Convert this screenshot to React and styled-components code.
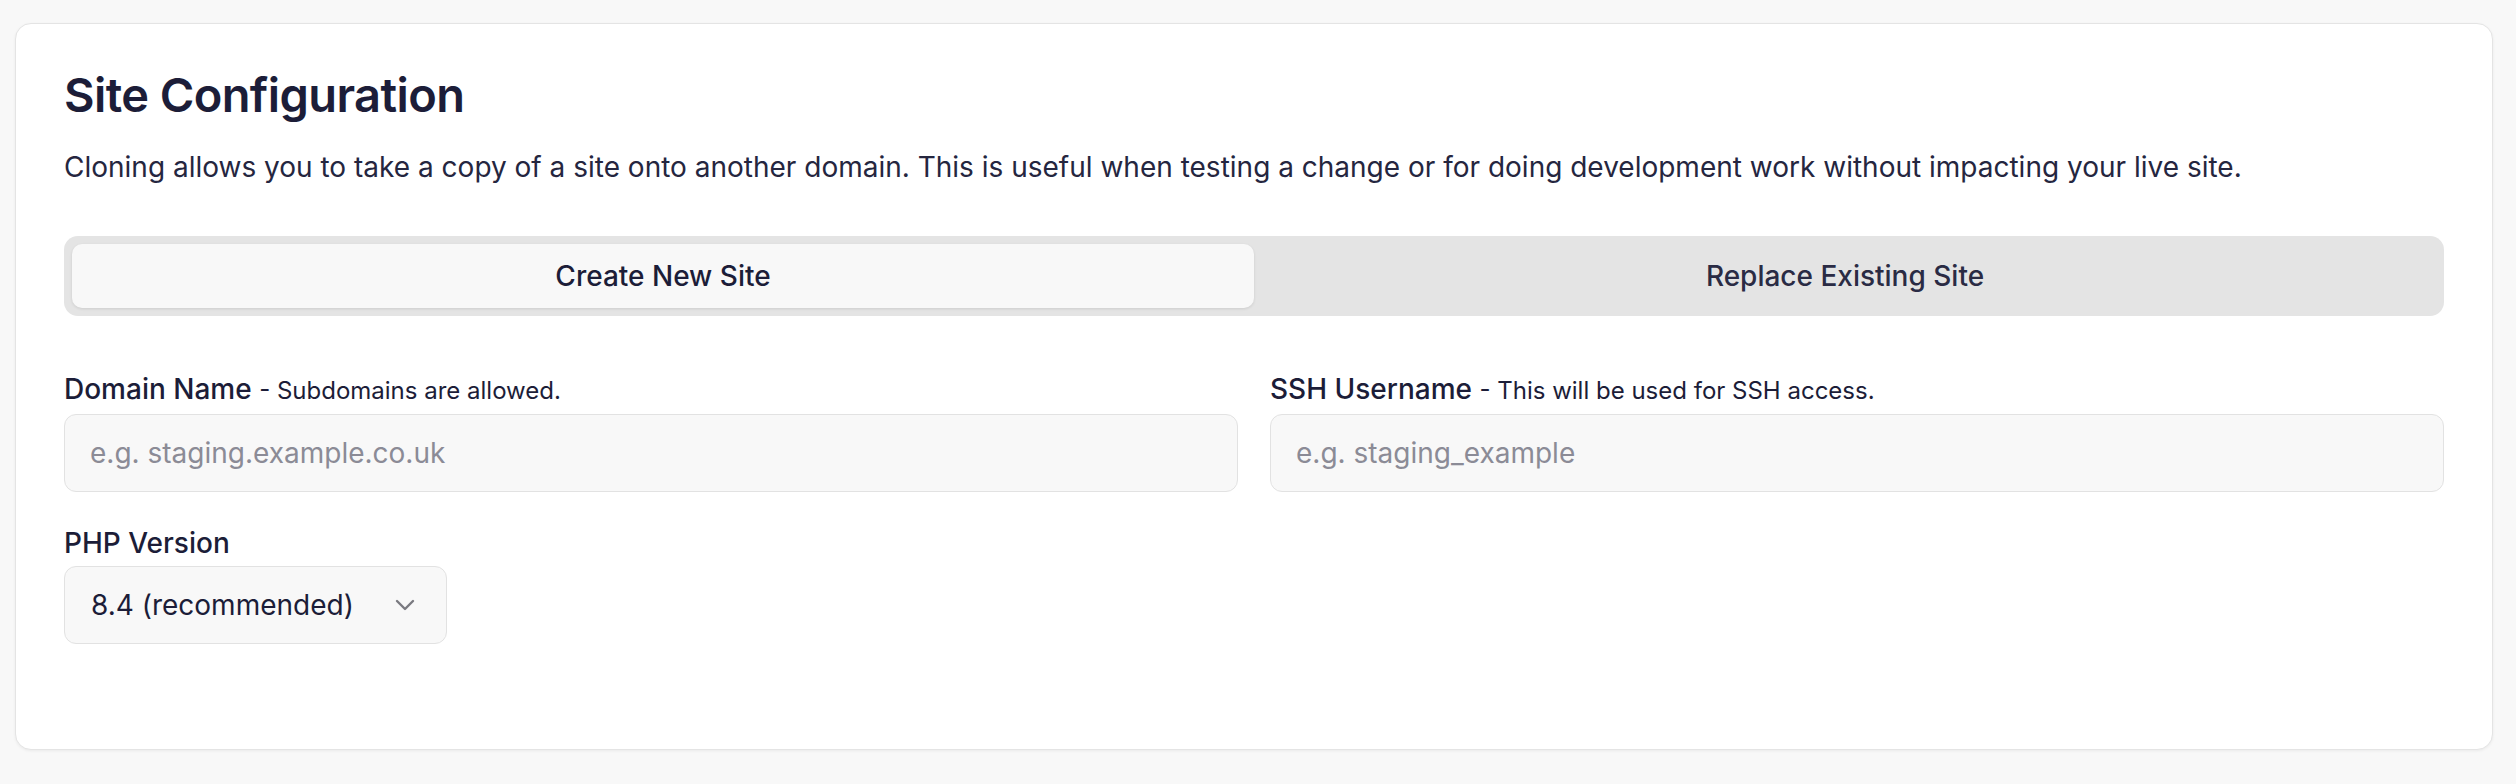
import React, { useState } from 'react'
import styled, { createGlobalStyle } from 'styled-components'

const GlobalStyle = createGlobalStyle`
  html, body {
    margin: 0;
    padding: 0;
    background: #f8f8f8;
    font-family: Inter, "Noto Sans", sans-serif;
    color: #1e1f3a;
  }
  * { box-sizing: border-box; }
`

const Page = styled.div`
  padding: 23px 23px 36px 15px;
`

const Card = styled.section`
  background: #ffffff;
  border: 1px solid #e4e4e4;
  border-radius: 16px;
  box-shadow: 0 1px 3px rgba(0, 0, 0, 0.06);
  padding: 42px 48px 105px 48px;
`

const Title = styled.h1`
  margin: 0 0 24px;
  font-size: 47px;
  line-height: 58px;
  font-weight: 600;
  letter-spacing: -0.6px;
  color: #1c1d38;
`

const Description = styled.p`
  margin: 0 0 50px;
  font-size: 28px;
  line-height: 38px;
  color: #25263f;
`

const Tabs = styled.div`
  display: grid;
  grid-template-columns: 1fr 1fr;
  background: #e4e4e4;
  border-radius: 14px;
  padding: 8px;
  margin-bottom: 54px;
`

const Tab = styled.button`
  height: 64px;
  border: none;
  border-radius: 10px;
  font-family: inherit;
  font-size: 28px;
  font-weight: 500;
  color: ${p => (p.active ? '#1c1d38' : '#2a2b44')};
  background: ${p => (p.active ? '#f8f8f8' : 'transparent')};
  box-shadow: ${p => (p.active ? '0 1px 3px rgba(0,0,0,0.1)' : 'none')};
  cursor: pointer;
`

const FieldRow = styled.div`
  display: grid;
  grid-template-columns: 1fr 1fr;
  column-gap: 32px;
  margin-bottom: 32px;
`

const Field = styled.div`
  display: flex;
  flex-direction: column;
`

const Label = styled.label`
  font-size: 28px;
  line-height: 38px;
  font-weight: 500;
  color: #1c1d38;
  margin-bottom: 4px;
`

const Hint = styled.span`
  font-size: 24px;
  font-weight: 400;
`

const Input = styled.input`
  height: 78px;
  width: 100%;
  border: 1px solid #e2e2e2;
  border-radius: 12px;
  background: #f8f8f8;
  padding: 0 25px;
  font-family: inherit;
  font-size: 28px;
  color: #1c1d38;
  outline: none;
  &::placeholder {
    color: #8b8b96;
  }
`

const SelectBox = styled.div`
  width: 383px;
  height: 78px;
  border: 1px solid #e2e2e2;
  border-radius: 12px;
  background: #f8f8f8;
  padding: 0 30px 0 26px;
  display: flex;
  align-items: center;
  justify-content: space-between;
  font-size: 28px;
  color: #1c1d38;
  cursor: pointer;
`

const Chevron = () => (
  <svg width="22" height="14" viewBox="0 0 22 14" fill="none">
    <polyline points="3,3 11,11 19,3" stroke="#7a7a80" strokeWidth="2.4" strokeLinecap="round" strokeLinejoin="round" />
  </svg>
)

export default function App() {
  const [tab, setTab] = useState('new')
  return (
    <Page>
      <GlobalStyle />
      <Card>
        <Title>Site Configuration</Title>
        <Description>
          Cloning allows you to take a copy of a site onto another domain. This is useful when testing a change or for doing development work without impacting your live site.
        </Description>
        <Tabs>
          <Tab active={tab === 'new'} onClick={() => setTab('new')}>Create New Site</Tab>
          <Tab active={tab === 'replace'} onClick={() => setTab('replace')}>Replace Existing Site</Tab>
        </Tabs>
        <FieldRow>
          <Field>
            <Label>
              Domain Name <Hint>- Subdomains are allowed.</Hint>
            </Label>
            <Input placeholder="e.g. staging.example.co.uk" />
          </Field>
          <Field>
            <Label>
              SSH Username <Hint>- This will be used for SSH access.</Hint>
            </Label>
            <Input placeholder="e.g. staging_example" />
          </Field>
        </FieldRow>
        <Field>
          <Label>PHP Version</Label>
          <SelectBox>
            <span>8.4 (recommended)</span>
            <Chevron />
          </SelectBox>
        </Field>
      </Card>
    </Page>
  )
}
